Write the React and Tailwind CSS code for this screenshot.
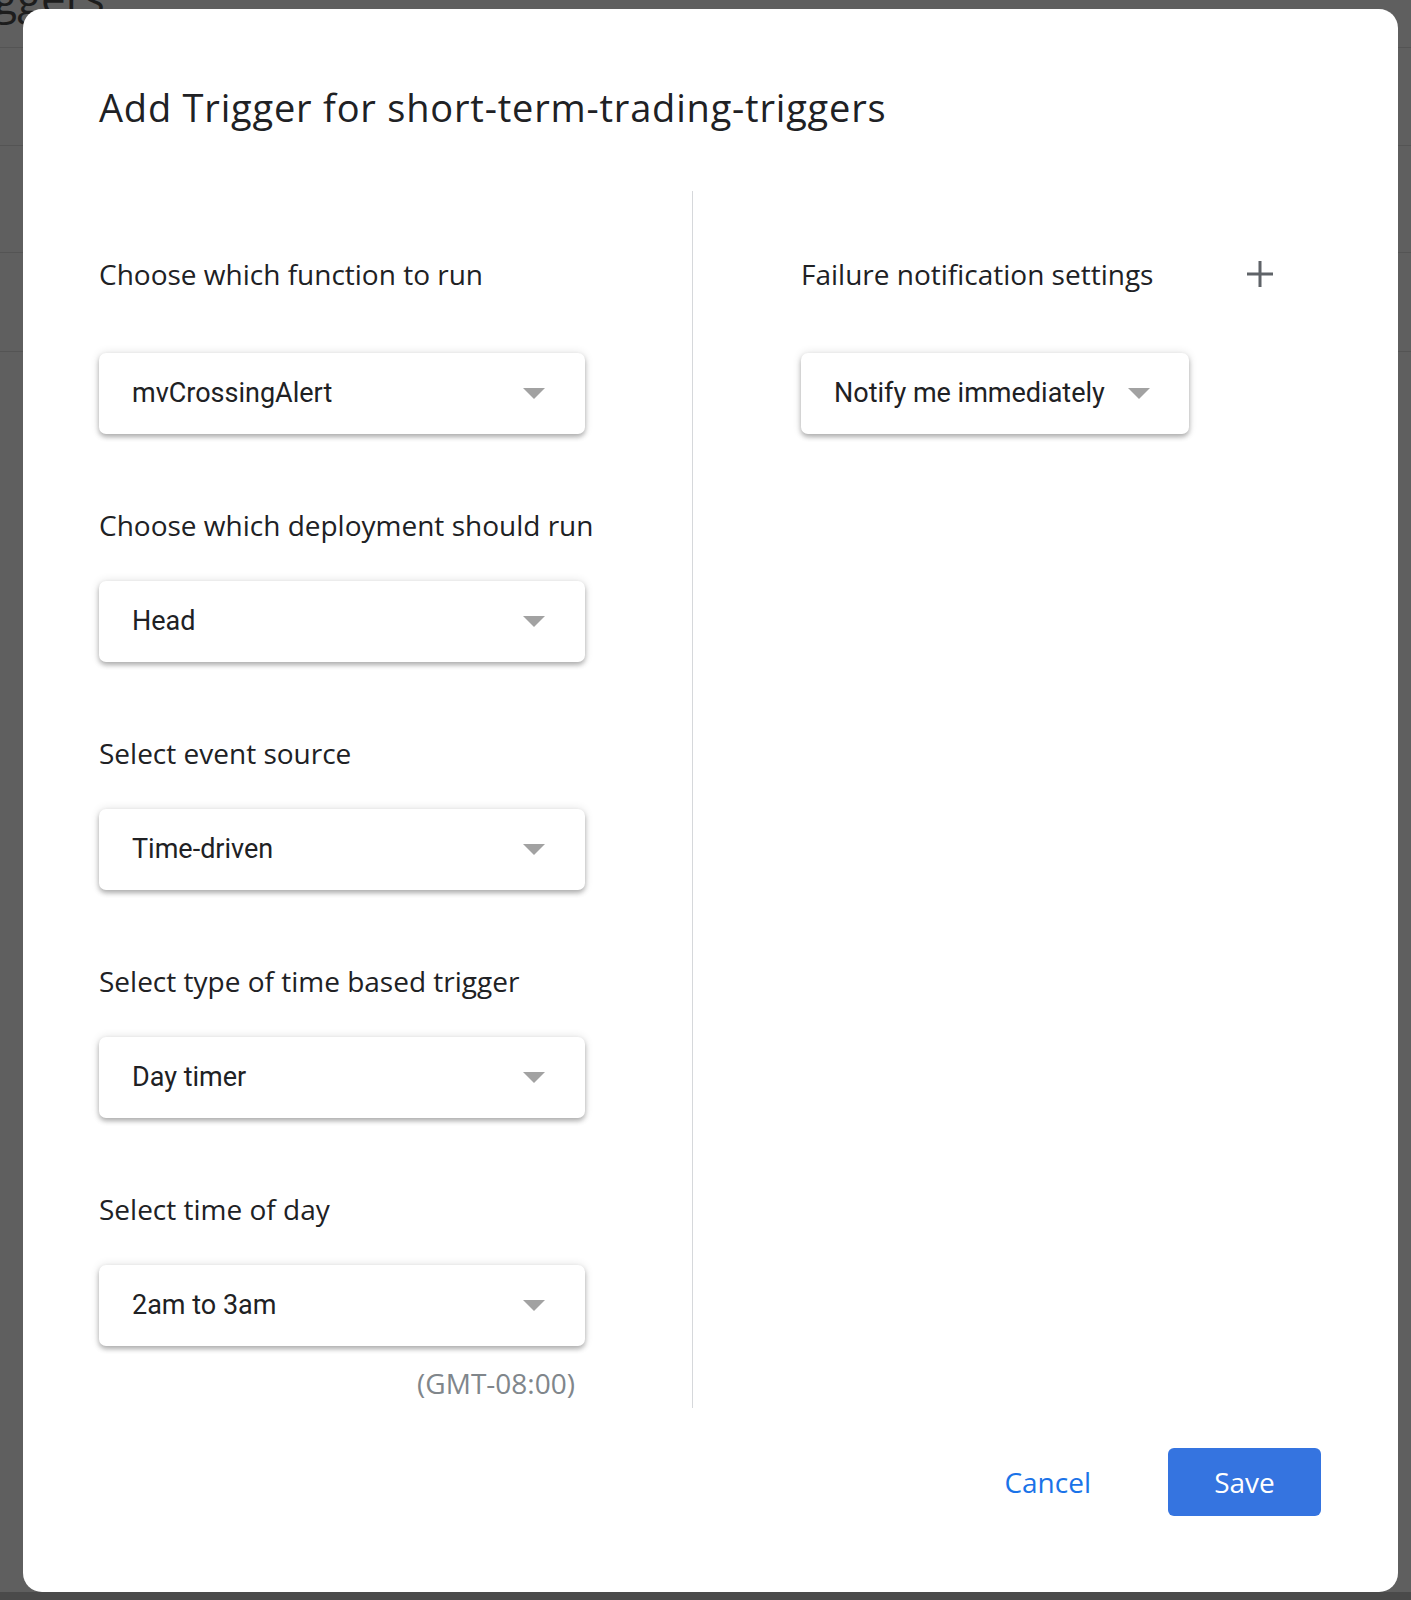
import { useState } from 'react';

const sans = { fontFamily: '"Open Sans", "Noto Sans", sans-serif' };
const roboto = { fontFamily: 'Roboto, "Liberation Sans", sans-serif' };

function Caret() {
  return (
    <svg width="22" height="11" viewBox="0 0 22 11" className="shrink-0">
      <path d="M0 0 L22 0 L11 11 Z" fill="#a2a2a2" />
    </svg>
  );
}

function Select({ value, className = 'w-[486px]', gap = 'justify-between' }) {
  return (
    <div
      className={`h-[81px] ${className} flex items-center ${gap} pl-[33px] pr-[40px] bg-white rounded-[7px] shadow-[0_3px_5px_rgba(0,0,0,0.28),0_0_10px_rgba(0,0,0,0.12)]`}
    >
      <span className="whitespace-nowrap shrink-0 text-[27px] text-[#202124]" style={roboto}>{value}</span>
      <Caret />
    </div>
  );
}

function Label({ children, className = '' }) {
  return (
    <div className={`h-[36px] leading-[36px] whitespace-nowrap text-[28px] text-[#202124] ${className}`} style={sans}>
      {children}
    </div>
  );
}

export default function App() {
  const [fn] = useState('mvCrossingAlert');

  const fields = [
    { label: 'Choose which deployment should run', value: 'Head' },
    { label: 'Select event source', value: 'Time-driven' },
    { label: 'Select type of time based trigger', value: 'Day timer' },
    { label: 'Select time of day', value: '2am to 3am' },
  ];

  return (
    <div className="relative w-[1411px] h-[1600px] overflow-hidden bg-[#5f5f5f]">
      {/* page behind the overlay */}
      <div className="flex flex-col">
        <div className="h-[48px] border-b border-[#545454] overflow-hidden">
          <div className="-mt-[36px] -ml-[60px] whitespace-nowrap text-[44px] text-[#1d1d1d]" style={sans}>Triggers</div>
        </div>
        <div className="h-[98px] border-b border-[#545454]" />
        <div className="h-[107px] border-b border-[#545454]" />
        <div className="h-[99px] border-b border-[#545454]" />
      </div>
      <div className="absolute left-0 right-0 bottom-0 h-[8px] bg-[#4a4a4a]" />

      {/* dialog */}
      <div className="absolute left-[23px] top-[9px] w-[1375px] h-[1583px] bg-white rounded-[19px] flex flex-col pl-[76px] pr-[77px]">
        <h1 className="mt-[76px] text-[38px] leading-[44px] tracking-[0.8px] text-[#202124]" style={sans}>
          Add Trigger for short-term-trading-triggers
        </h1>

        <div className="mt-[62px] flex">
          <div className="w-[594px] pt-[65px] pb-[9px] border-r border-[#d6d8db] flex flex-col">
            <Label>Choose which function to run</Label>
            <div className="mt-[61px]">
              <Select value={fn} />
            </div>
            {fields.map(f => (
              <div key={f.label} className="mt-[73px] flex flex-col">
                <Label>{f.label}</Label>
                <div className="mt-[38px]">
                  <Select value={f.value} />
                </div>
              </div>
            ))}
            <div className="mt-[21px] w-[486px] text-right pr-[10px] h-[32px] leading-[32px] text-[28px] text-[#80868b]" style={sans}>
              (GMT-08:00)
            </div>
          </div>

          <div className="flex-1 pl-[108px] pt-[65px] flex flex-col">
            <div className="flex items-center justify-between pr-[48px]">
              <Label>Failure notification settings</Label>
              <svg width="26" height="26" viewBox="0 0 26 26">
                <path d="M13 0 V26 M0 13 H26" stroke="#5f6368" strokeWidth="3" />
              </svg>
            </div>
            <div className="mt-[61px]">
              <Select value="Notify me immediately" className="w-[388px]" gap="gap-[23px]" />
            </div>
          </div>
        </div>

        <div className="mt-[40px] flex items-center justify-end gap-[77px]">
          <button className="text-[28px] text-[#1a73e8] font-medium" style={sans}>Cancel</button>
          <button className="w-[153px] h-[68px] rounded-[6px] bg-[#3574e0] text-white text-[28px] font-medium" style={sans}>
            Save
          </button>
        </div>
      </div>
    </div>
  );
}
